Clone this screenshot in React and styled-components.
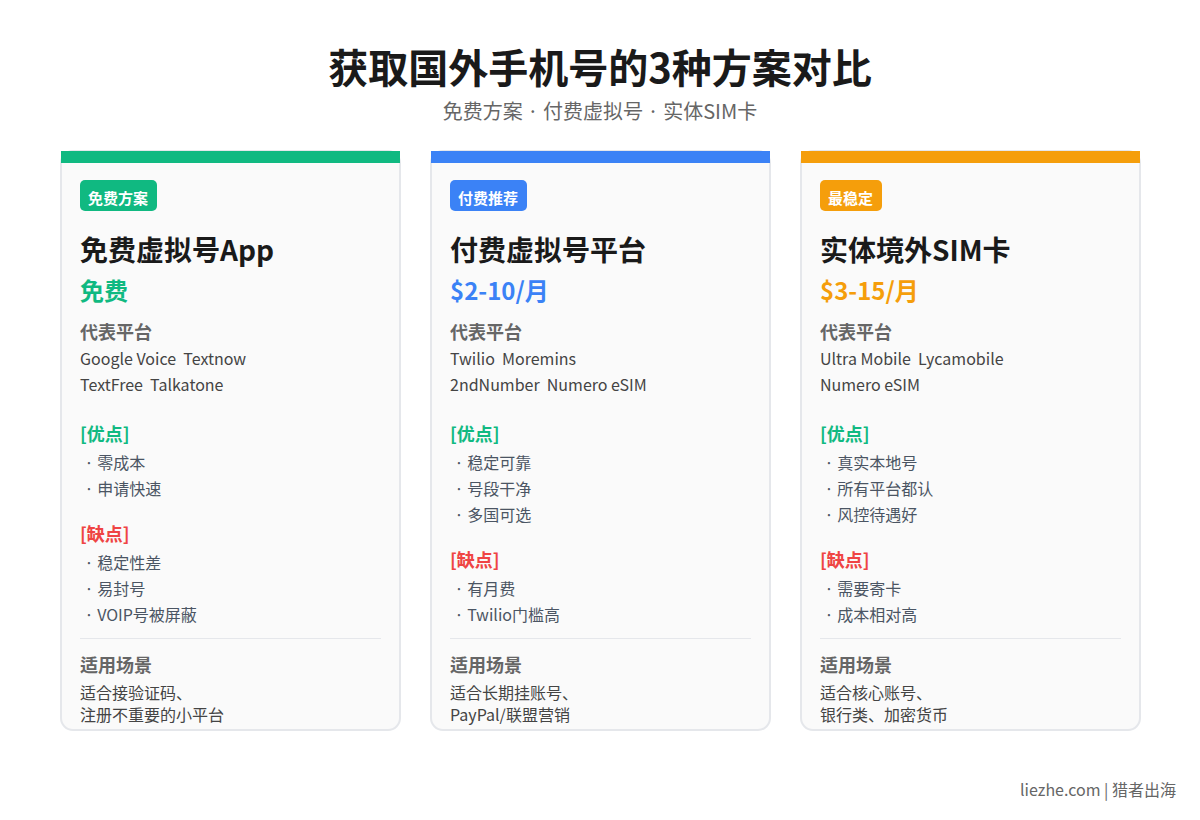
import React from "react";
import styled, { createGlobalStyle } from "styled-components";

const GlobalStyle = createGlobalStyle`
  html, body { margin: 0; padding: 0; background: #ffffff; }
  body { font-family: "Noto Sans CJK JP", "Noto Sans", sans-serif; }
`;

const Page = styled.div`
  width: 1200px;
  height: 820px;
  display: flex;
  flex-direction: column;
  overflow: hidden;
`;

const Header = styled.header`
  flex: none;
  padding-top: 36px;
  height: 150px;
  box-sizing: border-box;
  text-align: center;
`;

const Title = styled.h1`
  margin: 0;
  font-size: 40px;
  line-height: 60px;
  font-weight: 700;
  color: #1a1a1a;
`;

const Subtitle = styled.p`
  margin: 1px 0 0;
  font-size: 20px;
  line-height: 28px;
  color: #666666;
  white-space: pre;
`;

const Cards = styled.div`
  flex: none;
  display: flex;
  gap: 29px;
  padding-left: 60px;
`;

const Card = styled.section`
  position: relative;
  width: 341px;
  height: 581px;
  box-sizing: border-box;
  padding: 28px 18px 0;
  background: #fafafa;
  border: 2px solid #e5e7eb;
  border-radius: 13px;
`;

const TopBar = styled.div`
  position: absolute;
  top: -1px;
  left: -1px;
  right: -1px;
  height: 12px;
  background: ${(p) => p.$color};
`;

const Badge = styled.span`
  display: inline-block;
  height: 31px;
  padding: 0 9px 0 8px;
  border-radius: 5px;
  background: ${(p) => p.$color};
  color: #ffffff;
  font-size: 15px;
  font-weight: 700;
  line-height: 36px;
`;

const CardName = styled.h2`
  margin: 17px 0 0;
  font-size: 28px;
  line-height: 42px;
  font-weight: 700;
  color: #1a1a1a;
`;

const Price = styled.div`
  font-size: 24px;
  line-height: 40px;
  font-weight: 700;
  color: ${(p) => p.$color};
`;

const Label = styled.div`
  margin-top: ${(p) => p.$top || 0}px;
  margin-bottom: ${(p) => p.$bottom || 0}px;
  font-size: 18px;
  line-height: 26px;
  font-weight: 700;
  color: #666666;
`;

const PlatformRow = styled.div`
  font-size: 16px;
  line-height: 26px;
  color: #444444;
  white-space: pre;
`;

const Platforms = styled.div`
  margin-bottom: 23px;
`;

const Group = styled.div`
  margin-bottom: ${(p) => p.$bottom}px;
`;

const GroupTitle = styled.div`
  font-size: 18px;
  line-height: 26px;
  font-weight: 700;
  color: ${(p) => p.$color};
  margin-bottom: 3px;
`;

const Item = styled.div`
  padding-left: 1px;
  font-size: 16px;
  line-height: 26px;
  color: #4b5563;
  white-space: pre;
`;

const Divider = styled.hr`
  margin: 11px 0 12px;
  border: 0;
  border-top: 1px solid #e5e7eb;
`;

const Usage = styled.div`
  margin-top: 4px;
  font-size: 16px;
  line-height: 22px;
  color: #444444;
`;

const Footer = styled.footer`
  margin-top: 45px;
  padding-right: 24px;
  text-align: right;
  font-size: 16px;
  line-height: 26px;
  color: #666666;
`;

const GREEN = "#10b981";
const BLUE = "#3b82f6";
const AMBER = "#f59e0b";
const RED = "#ef4444";

const plans = [
  {
    color: GREEN,
    badge: "免费方案",
    name: "免费虚拟号App",
    price: "免费",
    platforms: ["Google Voice  Textnow", "TextFree  Talkatone"],
    pros: ["零成本", "申请快速"],
    cons: ["稳定性差", "易封号", "VOIP号被屏蔽"],
    usage: ["适合接验证码、", "注册不重要的小平台"],
  },
  {
    color: BLUE,
    badge: "付费推荐",
    name: "付费虚拟号平台",
    price: "$2-10/月",
    platforms: ["Twilio  Moremins", "2ndNumber  Numero eSIM"],
    pros: ["稳定可靠", "号段干净", "多国可选"],
    cons: ["有月费", "Twilio门槛高"],
    usage: ["适合长期挂账号、", "PayPal/联盟营销"],
  },
  {
    color: AMBER,
    badge: "最稳定",
    name: "实体境外SIM卡",
    price: "$3-15/月",
    platforms: ["Ultra Mobile  Lycamobile", "Numero eSIM"],
    pros: ["真实本地号", "所有平台都认", "风控待遇好"],
    cons: ["需要寄卡", "成本相对高"],
    usage: ["适合核心账号、", "银行类、加密货币"],
  },
];

const PlanCard = ({ plan }) => (
  <Card>
    <TopBar $color={plan.color} />
    <Badge $color={plan.color}>{plan.badge}</Badge>
    <CardName>{plan.name}</CardName>
    <Price $color={plan.color}>{plan.price}</Price>
    <Label $top={8} $bottom={1}>代表平台</Label>
    <Platforms>
      {plan.platforms.map((row) => (
        <PlatformRow key={row}>{row}</PlatformRow>
      ))}
    </Platforms>
    <Group $bottom={19}>
      <GroupTitle $color={GREEN}>[优点]</GroupTitle>
      {plan.pros.map((t) => (
        <Item key={t}>{" · " + t}</Item>
      ))}
    </Group>
    <Group $bottom={0}>
      <GroupTitle $color={RED}>[缺点]</GroupTitle>
      {plan.cons.map((t) => (
        <Item key={t}>{" · " + t}</Item>
      ))}
    </Group>
    <Divider />
    <Label>适用场景</Label>
    <Usage>
      {plan.usage.map((row) => (
        <div key={row}>{row}</div>
      ))}
    </Usage>
  </Card>
);

export default function App() {
  return (
    <Page>
      <GlobalStyle />
      <Header>
        <Title>获取国外手机号的3种方案对比</Title>
        <Subtitle>免费方案 · 付费虚拟号 · 实体SIM卡</Subtitle>
      </Header>
      <Cards>
        {plans.map((plan) => (
          <PlanCard key={plan.name} plan={plan} />
        ))}
      </Cards>
      <Footer>liezhe.com | 猎者出海</Footer>
    </Page>
  );
}
